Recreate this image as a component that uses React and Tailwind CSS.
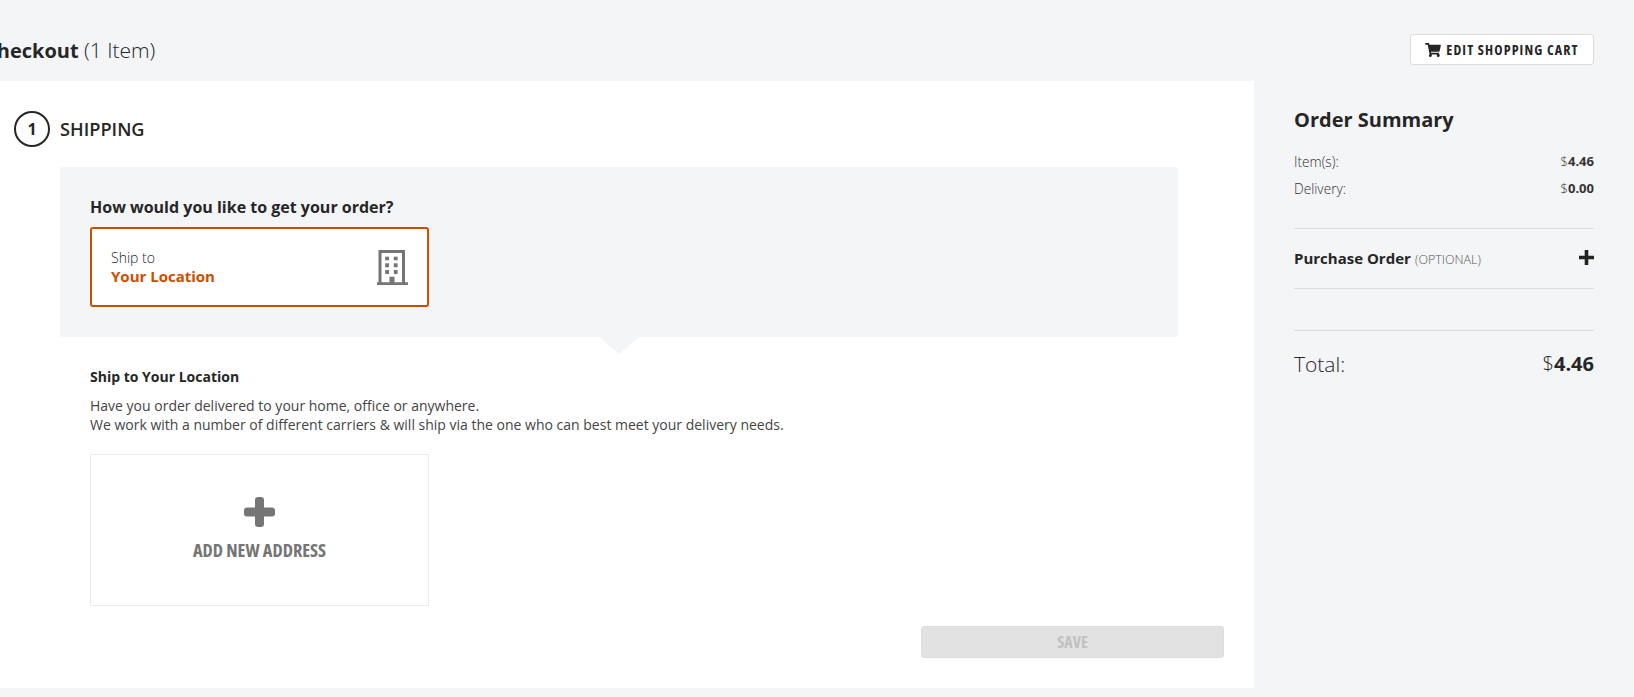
import React from "react";
import { FaShoppingCart } from "react-icons/fa";

const Row = ({ label, value }) => (
  <div className="flex justify-between h-[27px] items-center pt-px text-[#333]">
    <span className="font-light text-[13.700px]">{label}</span>
    <span className="font-light text-[13px]">$<span className="font-bold">{value}</span></span>
  </div>
);

const Building = () => (
  <svg viewBox="0 0 31 35" className="w-[31px] h-[35px]" fill="#757575">
    <path fillRule="evenodd" d="M1.500 0H28v32.300h3V35H0v-2.700h1.500zM4.500 3v29.300h8v-5.600h5v5.600H25V3z" />
    <rect x="8.200" y="6.700" width="3.800" height="3.600" /><rect x="16.800" y="6.700" width="3.800" height="3.600" />
    <rect x="8.200" y="13.300" width="3.800" height="4" /><rect x="16.800" y="13.300" width="3.800" height="4" />
    <rect x="8.200" y="20" width="3.800" height="4" /><rect x="16.800" y="20" width="3.800" height="4" />
  </svg>
);

const ThickPlus = () => (
  <svg viewBox="0 0 31 30" className="w-[31px] h-[30px]" fill="#757575">
    <rect x="11" y="0" width="9" height="30" rx="3" />
    <rect x="0" y="10.500" width="31" height="9" rx="3" />
  </svg>
);

export default function App() {
  return (
    <div className="bg-[#f4f5f7] h-[697px] overflow-hidden font-['Open_Sans',sans-serif] text-[#262626]">
      <header className="h-[81px] flex items-start justify-between pr-10 pt-[34px]">
        <h1 className="-ml-[16px] -mt-px leading-[34px] font-light text-[21px]">
          <span className="font-bold text-[20px]">Checkout</span> (1 Item)
        </h1>
        <button className="h-[31px] w-[184px] flex items-center justify-center gap-[5px] bg-white border border-[#dcdcdc] rounded-[3px] text-[14px] font-bold tracking-[1.1px] [font-stretch:75%]">
          <FaShoppingCart className="w-[16px] h-[14px]" />
          EDIT SHOPPING CART
        </button>
      </header>
      <div className="flex items-start">
        <main className="w-[1254px] h-[607px] bg-white flex flex-col">
          <div className="flex items-center gap-[10px] pl-[14px] pt-[30px] h-[66px]">
            <div className="w-[36px] h-[36px] rounded-full border-2 border-[#262626] flex items-center justify-center font-bold text-[16px]">1</div>
            <h2 className="text-[18.200px] font-semibold mt-px">SHIPPING</h2>
          </div>
          <section className="ml-[60px] mt-[20px] w-[1118px] h-[170px] bg-[#f4f5f7] rounded-[3px] pt-[29px] pl-[30px] relative">
            <h3 className="text-[16px] font-bold leading-[22px]">How would you like to get your order?</h3>
            <div className="mt-[9px] w-[339px] h-[80px] bg-white border-2 border-[#cc4e00] rounded-[3px] flex items-center justify-between pl-[19px] pr-[19px]">
              <div className="leading-[19px]">
                <div className="text-[14px] font-light">Ship to</div>
                <div className="text-[15px] font-bold text-[#cc4e00]">Your Location</div>
              </div>
              <Building />
            </div>
            <div className="absolute left-[539px] top-[170px] w-0 h-0 border-x-[20px] border-x-transparent border-t-[17px] border-t-[#f4f5f7]" />
          </section>
          <section className="pl-[90px] pt-[30px]">
            <h4 className="text-[14px] font-bold leading-[20px]">Ship to Your Location</h4>
            <p className="mt-[9px] text-[14px] leading-[19px] text-[#444]">
              Have you order delivered to your home, office or anywhere.<br />
              We work with a number of different carriers &amp; will ship via the one who can best meet your delivery needs.
            </p>
            <button className="mt-[20px] w-[339px] h-[152px] border border-[#ebebeb] flex flex-col items-center text-[#757575] pt-[42px]">
              <ThickPlus />
              <span className="mt-[10px] text-[18.300px] font-bold leading-[26px] [font-stretch:75%]">ADD NEW ADDRESS</span>
            </button>
          </section>
          <div className="flex justify-end pr-[30px] mt-[20px]">
            <button className="w-[303px] h-[32px] bg-[#e2e2e2] border border-[#dcdcdc] rounded-[3px] text-[#c0c0c0] text-[16px] font-bold [font-stretch:75%]">SAVE</button>
          </div>
        </main>
        <aside className="w-[380px] pl-10 pr-10">
          <h2 className="text-[20px] font-bold leading-[28px] mt-[25px]">Order Summary</h2>
          <div className="mt-[14px]">
            <Row label="Item(s):" value="4.46" />
            <Row label="Delivery:" value="0.00" />
          </div>
          <div className="mt-[26px] border-y border-[#dcdcdc] h-[61px] flex items-center justify-between">
            <div className="leading-none">
              <span className="text-[15px] font-bold">Purchase Order</span>{" "}
              <span className="text-[12.500px] font-light text-[#555]">(OPTIONAL)</span>
            </div>
            <svg viewBox="0 0 15 15" className="w-[15px] h-[15px] mb-[3px]" fill="#222"><path d="M5.700 0h3.600v5.700H15v3.600H9.300V15H5.700V9.300H0V5.700h5.700z" /></svg>
          </div>
          <div className="mt-[41px] border-t border-[#dcdcdc] pt-[19px] flex items-center justify-between font-light leading-[28px]">
            <span className="text-[21px]">Total:</span>
            <span className="text-[20px]">$<span className="font-bold">4.46</span></span>
          </div>
        </aside>
      </div>
    </div>
  );
}
